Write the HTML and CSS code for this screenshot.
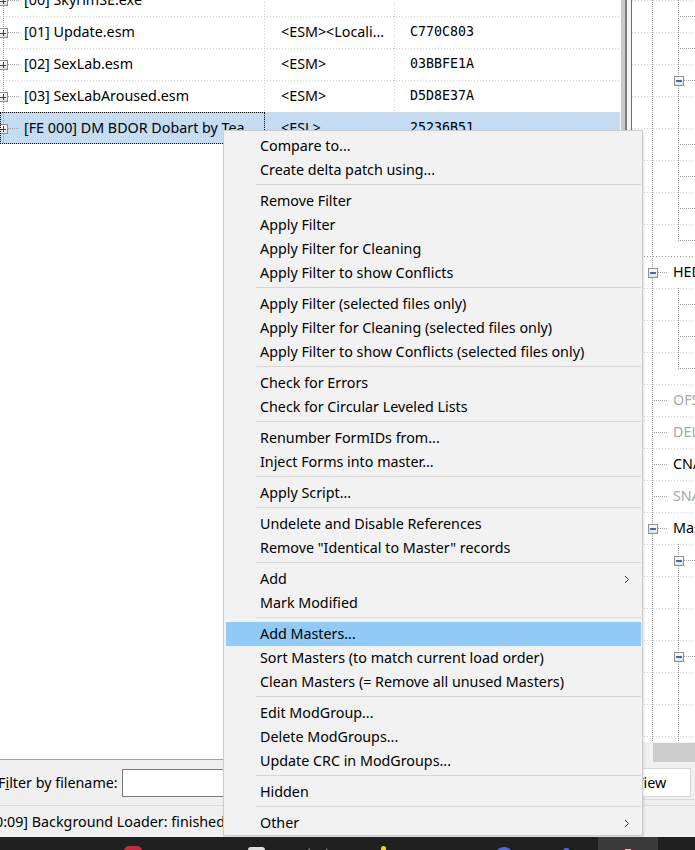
FILE: index.html
```html
<!DOCTYPE html>
<html>
<head>
<meta charset="utf-8">
<title>xEdit</title>
<link rel="stylesheet" href="styles.css">
</head>
<body>
<div class="app">
  <div class="main">
    <div class="left">
      <div class="tree-left">
        <div class="frow first">
          <div class="c1"><span class="gut"><span class="pbox"></span></span><span class="name">[00] SkyrimSE.exe</span></div>
          <div class="c2"></div>
          <div class="c3"></div>
        </div>
        <div class="frow">
          <div class="c1"><span class="gut"><span class="pbox"></span></span><span class="name">[01] Update.esm</span></div>
          <div class="c2">&lt;ESM&gt;&lt;Locali…</div>
          <div class="c3">C770C803</div>
        </div>
        <div class="frow">
          <div class="c1"><span class="gut"><span class="pbox"></span></span><span class="name">[02] SexLab.esm</span></div>
          <div class="c2">&lt;ESM&gt;</div>
          <div class="c3">03BBFE1A</div>
        </div>
        <div class="frow">
          <div class="c1"><span class="gut"><span class="pbox"></span></span><span class="name">[03] SexLabAroused.esm</span></div>
          <div class="c2">&lt;ESM&gt;</div>
          <div class="c3">D5D8E37A</div>
        </div>
        <div class="frow sel">
          <div class="c1 focus"><span class="gut"><span class="pbox"></span></span><span class="name">[FE 000] DM BDOR Dobart by Tea</span></div>
          <div class="c2">&lt;ESL&gt;</div>
          <div class="c3">25236B51</div>
        </div>
      </div>
      <div class="filterbar">
        <span class="flabel">F<u>i</u>lter by filename:</span>
        <input class="finput" type="text">
      </div>
    </div>
    <div class="splitter"></div>
    <div class="right">
      <div class="tree-right">
        <div class="rrow"><span class="i v"></span><span class="i t wide"></span></div>
        <div class="rrow"><span class="i v"></span><span class="i t wide"></span></div>
        <div class="rrow"><span class="i v"></span><span class="i n wide"><span class="mbox"></span></span></div>
        <div class="rrow"><span class="i v"></span><span class="i v"></span></div>
        <div class="rrow"><span class="i v"></span><span class="i t wide"></span></div>
        <div class="rrow"><span class="i v"></span><span class="i t wide"></span></div>
        <div class="rrow"><span class="i v"></span><span class="i t wide"></span></div>
        <div class="rrow"><span class="i v"></span><span class="i l wide"></span></div>
        <div class="rrow dark"><span class="i n w1"><span class="mbox"></span></span><span class="rtext">HEDR</span></div>
        <div class="rrow"><span class="i v"></span><span class="i t wide"></span></div>
        <div class="rrow"><span class="i v"></span><span class="i t wide"></span></div>
        <div class="rrow"><span class="i v"></span><span class="i l wide"></span></div>
        <div class="rrow"><span class="i t w1"></span><span class="rtext muted">OFST</span></div>
        <div class="rrow"><span class="i t w1"></span><span class="rtext muted">DELE</span></div>
        <div class="rrow"><span class="i t w1"></span><span class="rtext">CNAM</span></div>
        <div class="rrow"><span class="i t w1"></span><span class="rtext muted">SNAM</span></div>
        <div class="rrow"><span class="i n w1"><span class="mbox"></span></span><span class="rtext">Master Files</span></div>
        <div class="rrow"><span class="i v"></span><span class="i n wide"><span class="mbox"></span></span></div>
        <div class="rrow"><span class="i v"></span><span class="i v"></span></div>
        <div class="rrow"><span class="i v"></span><span class="i v"></span></div>
        <div class="rrow"><span class="i v"></span><span class="i n wide"><span class="mbox"></span></span></div>
        <div class="rrow"><span class="i v"></span><span class="i v"></span></div>
        <div class="rrow"><span class="i v"></span><span class="i v"></span></div>
        <div class="rrow"><span class="i v"></span><span class="i v"></span></div>
      </div>
      <div class="hscroll"><div class="thumb"></div></div>
      <div class="tabs">
        <div class="tab">View</div>
        <div class="tabline"></div>
      </div>
    </div>
  </div>
  <div class="status"><span class="stext">0:09] Background Loader: finished</span></div>
  <div class="taskbar">
    <span class="tb red"></span>
    <span class="tb white"></span>
    <span class="tb arrow1"></span>
    <span class="tb arrow2"></span>
    <span class="tb yellow"></span>
    <span class="tb blue"></span>
    <span class="tb blue2"></span>
    <span class="tb active"><span class="appicon"></span></span>
  </div>

  <div class="menu">
    <div class="mi">Compare to...</div>
    <div class="mi">Create delta patch using...</div>
    <div class="sep"></div>
    <div class="mi">Remove Filter</div>
    <div class="mi">Apply Filter</div>
    <div class="mi">Apply Filter for Cleaning</div>
    <div class="mi">Apply Filter to show Conflicts</div>
    <div class="sep"></div>
    <div class="mi">Apply Filter (selected files only)</div>
    <div class="mi">Apply Filter for Cleaning (selected files only)</div>
    <div class="mi">Apply Filter to show Conflicts (selected files only)</div>
    <div class="sep"></div>
    <div class="mi">Check for Errors</div>
    <div class="mi">Check for Circular Leveled Lists</div>
    <div class="sep"></div>
    <div class="mi">Renumber FormIDs from...</div>
    <div class="mi">Inject Forms into master...</div>
    <div class="sep"></div>
    <div class="mi">Apply Script...</div>
    <div class="sep"></div>
    <div class="mi">Undelete and Disable References</div>
    <div class="mi">Remove "Identical to Master" records</div>
    <div class="sep"></div>
    <div class="mi sub">Add<svg class="chev" width="6" height="9" viewBox="0 0 6 9"><path d="M1 1 L4.5 4.5 L1 8" fill="none" stroke="#333" stroke-width="1"/></svg></div>
    <div class="mi">Mark Modified</div>
    <div class="sep"></div>
    <div class="mi hl">Add Masters...</div>
    <div class="mi">Sort Masters (to match current load order)</div>
    <div class="mi">Clean Masters (= Remove all unused Masters)</div>
    <div class="sep"></div>
    <div class="mi">Edit ModGroup...</div>
    <div class="mi">Delete ModGroups...</div>
    <div class="mi">Update CRC in ModGroups...</div>
    <div class="sep"></div>
    <div class="mi">Hidden</div>
    <div class="sep"></div>
    <div class="mi sub">Other<svg class="chev" width="6" height="9" viewBox="0 0 6 9"><path d="M1 1 L4.5 4.5 L1 8" fill="none" stroke="#333" stroke-width="1"/></svg></div>
  </div>
</div>
</body>
</html>
```

FILE: styles.css
```css
* { box-sizing: border-box; }
html, body { margin: 0; padding: 0; }
body {
  width: 695px;
  height: 850px;
  overflow: hidden;
  background: #f0f0f0;
  font-family: "Noto Sans", "Segoe UI", sans-serif;
  font-size: 14.3px;
  color: #000;
  --vd: repeating-linear-gradient(to bottom, #a0a0a0 0 1px, transparent 1px 2px);
  --hd: repeating-linear-gradient(to right, #a0a0a0 0 1px, transparent 1px 2px);
  --gh: repeating-linear-gradient(to right, #d2d2d2 0 1px, transparent 1px 3px);
  --gv: repeating-linear-gradient(to bottom, #d2d2d2 0 1px, transparent 1px 3px);
}
.app {
  position: relative;
  width: 695px;
  height: 850px;
  display: flex;
  flex-direction: column;
}
.main { display: flex; height: 805px; flex: none; }

/* left file tree */
.left { width: 620px; flex: none; display: flex; flex-direction: column; }
.tree-left {
  height: 760px;
  flex: none;
  background: #fff;
  border-bottom: 1px solid #a0a0a0;
  overflow: hidden;
}
.frow {
  display: flex;
  height: 32px;
  line-height: 32px;
  white-space: nowrap;
  background-image: var(--gh);
  background-size: 100% 1px;
  background-position: 0 0;
  background-repeat: no-repeat;
}
.frow.first { margin-top: -16px; }
.frow.sel { background-color: #c4ddf4; }
.c1, .c2, .c3 { height: 32px; overflow: hidden; }
.c1, .c2 {
  background-image: var(--gv);
  background-size: 1px 100%;
  background-position: 100% 0;
  background-repeat: no-repeat;
}
.c1 { width: 265px; display: flex; }
.c2 { width: 130px; padding-left: 16px; }
.c3 {
  width: 225px;
  padding-left: 15px;
  font-family: "DejaVu Sans Mono", "Liberation Mono", monospace;
  font-size: 13.3px;
}
.c1.focus { outline: 1px dotted #000; outline-offset: -1px; }
.gut {
  flex: none;
  display: block;
  width: 24px;
  height: 32px;
  background-image: var(--vd), var(--hd);
  background-size: 1px 32px, 12px 1px;
  background-position: 3px 0, 8px 16px;
  background-repeat: no-repeat;
}
.pbox {
  display: block;
  width: 10px;
  height: 10px;
  margin: 12px 0 0 -2px;
  border: 1px solid #8e8e8e;
  background:
    linear-gradient(#23418a, #23418a) center / 6px 1px no-repeat,
    linear-gradient(#23418a, #23418a) center / 1px 6px no-repeat,
    linear-gradient(#ffffff, #e2e2e2);
}

.filterbar {
  flex: 1;
  display: flex;
  align-items: center;
  white-space: nowrap;
}
.flabel { margin-left: -2px; }
.finput {
  margin-left: 4px;
  width: 500px;
  height: 28px;
  border: 1px solid #7a7a7a;
  background: #fff;
  padding: 0;
  outline: none;
}

.splitter {
  width: 12px;
  flex: none;
  background: linear-gradient(to right, #ffffff 0 1px, #c9c9c9 1px 5px, #7c7c7c 5px 7px, #f5f5f5 7px 11px, #6e6e6e 11px 12px);
}

/* right record view */
.right { width: 63px; flex: none; display: flex; flex-direction: column; overflow: hidden; }
.tree-right { height: 742px; flex: none; background: #fff; overflow: hidden; }
.rrow {
  display: flex;
  height: 32px;
  padding-left: 7px;
  line-height: 32px;
  white-space: nowrap;
  background-image: var(--gh);
  background-size: 100% 1px;
  background-position: 0 0;
  background-repeat: no-repeat;
}
.rrow.dark {
  background-image: repeating-linear-gradient(to right, #9a9a9a 0 1px, transparent 1px 3px);
}
.i {
  flex: none;
  display: block;
  width: 26px;
  height: 32px;
  background-repeat: no-repeat;
}
.i.wide { width: 32px; }
.i.w1 { width: 29px; }
.i.v {
  background-image: var(--vd);
  background-size: 1px 32px;
  background-position: 13px 0;
}
.i.t {
  background-image: var(--vd), var(--hd);
  background-size: 1px 32px, 100% 1px;
  background-position: 13px 0, 15px 16px;
}
.i.l {
  background-image: var(--vd), var(--hd);
  background-size: 1px 17px, 100% 1px;
  background-position: 13px 0, 15px 16px;
}
.i.n {
  background-image: var(--vd), var(--hd);
  background-size: 1px 32px, 100% 1px;
  background-position: 13px 0, 19px 16px;
}
.mbox {
  display: block;
  width: 10px;
  height: 10px;
  margin: 12px 0 0 9px;
  border: 1px solid #8e8e8e;
  background:
    linear-gradient(#4466b8, #4466b8) center / 6px 2px no-repeat,
    linear-gradient(#ffffff, #e4e4e4);
}
.rtext { margin-left: 5px; }
.rtext.muted { color: #a8a8a8; }

.hscroll {
  height: 20px;
  flex: none;
  background: #f0f0f0;
  display: flex;
  justify-content: flex-end;
  padding-top: 1px;
}
.thumb { width: 42px; height: 19px; background: #cdcdcd; }
.tabs { flex: 1; padding-top: 6px; }
.tab {
  width: 59px;
  height: 29px;
  line-height: 28px;
  padding-left: 3px;
  background: #fff;
  border: 1px solid #d9d9d9;
  border-left: none;
}
.tabline { margin-top: 2px; height: 1px; background: #dadada; }

/* status bar */
.status {
  height: 32px;
  flex: none;
  border-top: 1px solid #dadada;
  display: flex;
  align-items: center;
  white-space: nowrap;
  overflow: hidden;
}
.stext { margin-left: -5px; }

/* taskbar */
.taskbar {
  height: 13px;
  flex: none;
  background: #202020;
  display: flex;
  align-items: flex-start;
  overflow: hidden;
  position: relative;
  z-index: 2;
}
.tb { display: block; flex: none; }
.red { margin: 9px 0 0 124px; width: 18px; height: 12px; border-radius: 5px 5px 0 0; background: #c62a3a; }
.white { margin: 10px 0 0 106px; width: 17px; height: 12px; border-radius: 3px 3px 0 0; background: #dedede; }
.arrow1 { margin: 11px 0 0 38px; width: 7px; height: 6px; background: #7a7a7a; clip-path: polygon(100% 0, 0 100%, 100% 100%); }
.arrow2 { margin: 11px 0 0 16px; width: 6px; height: 6px; background: #7a7a7a; clip-path: polygon(0 0, 0 100%, 100% 100%); }
.yellow { margin: 9px 0 0 49px; width: 5px; height: 6px; border-radius: 3px 3px 0 0; background: #f3d21c; }
.blue { margin: 10px 0 0 108px; width: 20px; height: 14px; border-radius: 10px 10px 0 0; background: #4f63e6; }
.blue2 { margin: 11px 0 0 49px; width: 7px; height: 6px; border-radius: 4px 4px 0 0; background: #5b64dd; }
.active { margin: 0 0 0 28px; width: 60px; height: 13px; background: #3a3a3a; padding: 10px 0 0 20px; }
.appicon { display: block; width: 20px; height: 10px; border-radius: 10px 10px 0 0; background: radial-gradient(circle at 50% 100%, #ffffff 0 3px, #7a3a4a 3px 6px, #d9c4c8 6px 8px, #5a2a35 8px); }

/* context menu */
.menu {
  position: absolute;
  left: 223px;
  top: 130px;
  width: 420px;
  background: #f2f2f2;
  border: 1px solid #cccccc;
  padding: 3px 1px 0 2px;
  box-shadow: 1px 1px 2px rgba(0, 0, 0, 0.12);
  z-index: 1;
}
.mi {
  height: 24px;
  line-height: 22px;
  padding-left: 34px;
  white-space: nowrap;
  display: flex;
  align-items: center;
}
.mi.hl { background: #91c9f7; }
.chev { margin-left: auto; margin-right: 11px; margin-top: 1px; }
.sep {
  height: 7px;
  padding-top: 2px;
  padding-left: 30px;
}
.sep::before {
  content: "";
  display: block;
  height: 1px;
  background: #d7d7d7;
}
```
